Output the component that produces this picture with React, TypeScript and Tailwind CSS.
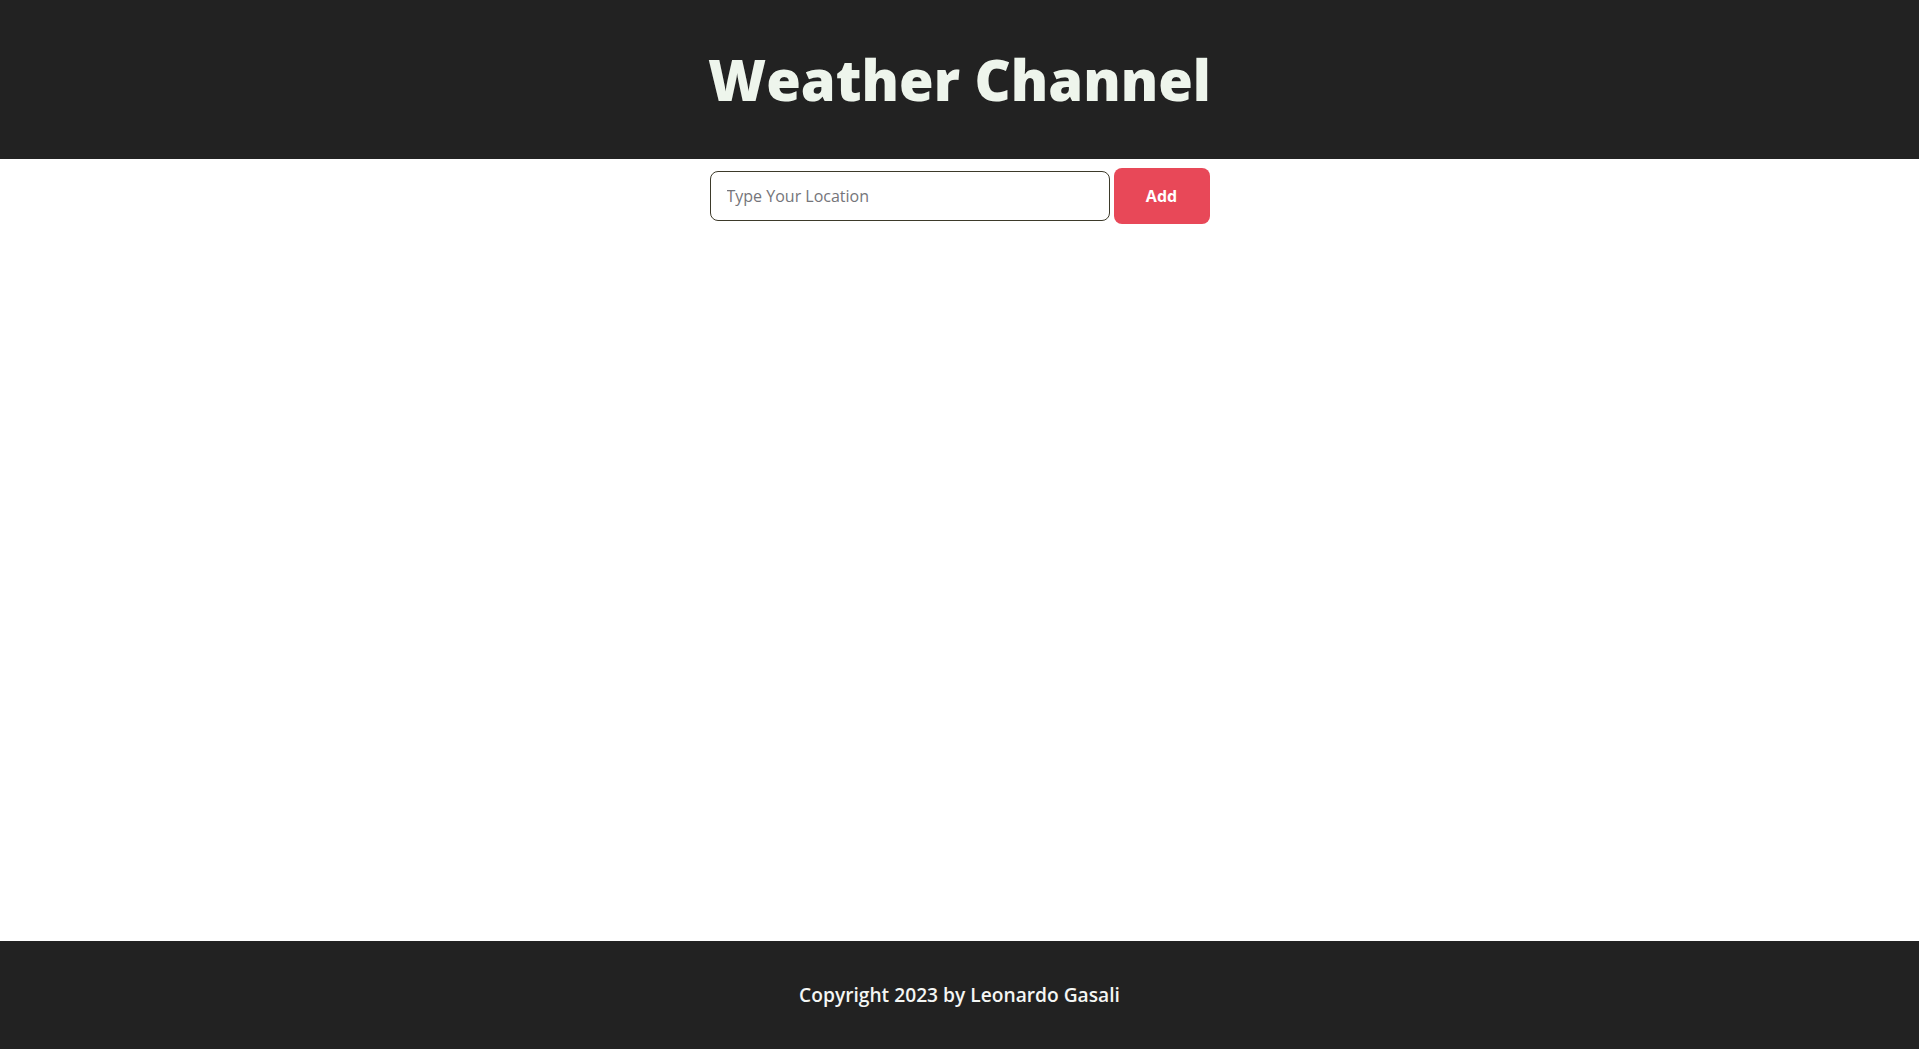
import { useState } from "react";

export default function App() {
  const [location, setLocation] = useState("");

  return (
    <div className="flex min-h-screen flex-col bg-white font-['Open_Sans',sans-serif]">
      <header className="flex h-[159px] items-center justify-center bg-[#222222]">
        <h1 className="pb-[2px] text-[56px] font-extrabold leading-none text-[#eef5ec]">Weather Channel</h1>
      </header>

      <main className="flex flex-1 items-start justify-center pt-[9px]">
        <form
          className="flex items-center gap-[4px]"
          onSubmit={(e) => {
            e.preventDefault();
            setLocation("");
          }}
        >
          <input
            value={location}
            onChange={(e) => setLocation(e.target.value)}
            placeholder="Type Your Location"
            className="h-[50px] w-[400px] rounded-[8px] border border-[#3d3a2a] px-[16px] text-[16px] text-[#222] outline-none placeholder:text-[#75757a]"
          />
          <button
            type="submit"
            className="h-[56px] w-[96px] rounded-[8px] bg-[#e84858] text-[16px] font-bold text-white"
          >
            Add
          </button>
        </form>
      </main>

      <footer className="flex h-[108px] items-center justify-center bg-[#222222]">
        <p className="text-[19.2px] font-semibold text-[#f4f6f4]">Copyright 2023 by Leonardo Gasali</p>
      </footer>
    </div>
  );
}
